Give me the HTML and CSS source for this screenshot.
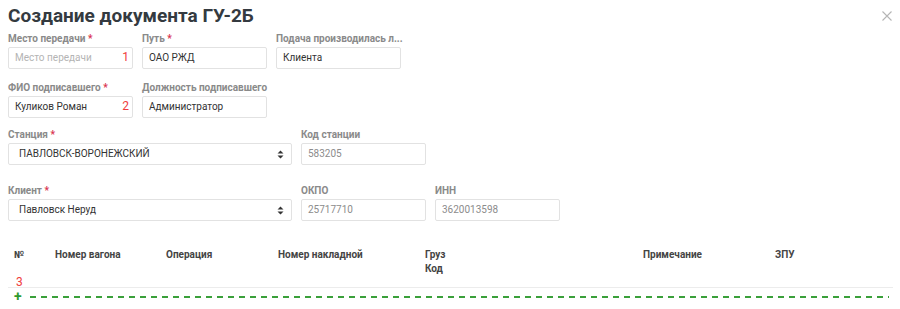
FILE: index.html
```html
<!DOCTYPE html>
<html lang="ru">
<head>
<meta charset="utf-8">
<link rel="stylesheet" href="styles.css">
</head>
<body>
<div class="modal">
  <div class="head">
    <h1 class="title">Создание документа ГУ-2Б</h1>
    <span class="close">
      <svg width="10" height="10" viewBox="0 0 10 10"><path d="M0.5 0.5L9.5 9.5M9.5 0.5L0.5 9.5" stroke="#b5b5b5" stroke-width="1.1" fill="none"/></svg>
    </span>
  </div>

  <div class="row r1">
    <div class="field">
      <div class="label">Место передачи <span class="req">*</span></div>
      <div class="input placeholder">Место передачи<span class="mark">1</span></div>
    </div>
    <div class="field">
      <div class="label">Путь <span class="req">*</span></div>
      <div class="input">ОАО РЖД</div>
    </div>
    <div class="field">
      <div class="label">Подача производилась л...</div>
      <div class="input">Клиента</div>
    </div>
  </div>

  <div class="row r2">
    <div class="field">
      <div class="label">ФИО подписавшего <span class="req">*</span></div>
      <div class="input">Куликов Роман<span class="mark">2</span></div>
    </div>
    <div class="field">
      <div class="label">Должность подписавшего</div>
      <div class="input">Администратор</div>
    </div>
  </div>

  <div class="row r3">
    <div class="field wide">
      <div class="label">Станция <span class="req">*</span></div>
      <div class="input select">ПАВЛОВСК-ВОРОНЕЖСКИЙ
        <svg class="arrows" width="7" height="9" viewBox="0 0 7 9"><path d="M3.5 0.5L6.5 3.5H0.5Z M3.5 8.5L6.5 5.5H0.5Z" fill="#333"/></svg>
      </div>
    </div>
    <div class="field">
      <div class="label">Код станции</div>
      <div class="input disabled">583205</div>
    </div>
  </div>

  <div class="row r4">
    <div class="field wide">
      <div class="label">Клиент <span class="req">*</span></div>
      <div class="input select">Павловск Неруд
        <svg class="arrows" width="7" height="9" viewBox="0 0 7 9"><path d="M3.5 0.5L6.5 3.5H0.5Z M3.5 8.5L6.5 5.5H0.5Z" fill="#333"/></svg>
      </div>
    </div>
    <div class="field">
      <div class="label">ОКПО</div>
      <div class="input disabled">25717710</div>
    </div>
    <div class="field">
      <div class="label">ИНН</div>
      <div class="input disabled">3620013598</div>
    </div>
  </div>

  <table class="grid">
    <thead>
      <tr>
        <th class="c1">№</th>
        <th class="c2">Номер вагона</th>
        <th class="c3">Операция</th>
        <th class="c4">Номер накладной</th>
        <th class="c5">Груз<br>Код</th>
        <th class="c6">Примечание</th>
        <th class="c7">ЗПУ</th>
      </tr>
    </thead>
  </table>
  <div class="mark3">3</div>
  <div class="addrow">
    <span class="plus">+</span>
    <span class="dash"></span>
  </div>
</div>
</body>
</html>
```

FILE: styles.css
```css
* { box-sizing: border-box; }
html, body { margin: 0; padding: 0; background: #fff; }
body {
  font-family: Roboto, "Noto Sans", "Liberation Sans", sans-serif;
  color: #333;
  width: 900px;
  height: 309px;
  overflow: hidden;
}
.modal { padding: 4px 8px 0 8px; }
.head { display: flex; justify-content: space-between; align-items: flex-start; }
.title {
  margin: 0;
  font-size: 19px;
  line-height: 24px;
  font-weight: 700;
  color: #343a40;
}
.close { margin-top: 7px; margin-right: 0; display: block; }
.close svg { display: block; }

.row { display: flex; gap: 9px; }
.r1 { margin-top: 4px; }
.r2 { margin-top: 12px; }
.r3 { margin-top: 10px; }
.r4 { margin-top: 19px; }

.field { width: 125px; display: flex; flex-direction: column; }
.field.wide { width: 284px; }
.label {
  font-size: 10px;
  line-height: 13px;
  font-weight: 700;
  color: #8a8a8a;
  margin-bottom: 2px;
  white-space: nowrap;
}
.req { color: #d9334f; }
.input {
  position: relative;
  height: 22px;
  border: 1px solid #e2e2e2;
  border-radius: 2px;
  font-size: 10px;
  line-height: 20px;
  padding: 0 6px;
  color: #333;
  white-space: nowrap;
}
.input.placeholder { color: #b4b4b4; }
.input.disabled { color: #8c8c8c; }
.select { padding-left: 10px; display: flex; align-items: center; justify-content: space-between; padding-right: 7px; }
.arrows { display: block; }
.mark {
  position: absolute;
  right: 3px;
  top: 0;
  color: #f03c3c;
  font-size: 12px;
  line-height: 18px;
}

.grid {
  margin-top: 27px;
  width: 885px;
  border-collapse: collapse;
  table-layout: fixed;
}
.grid th {
  text-align: left;
  vertical-align: top;
  font-size: 10px;
  line-height: 14px;
  font-weight: 700;
  color: #444;
  padding: 0 6px 11px 6px;
  border-bottom: 1px solid #ececec;
}
.c1 { width: 41px; }
.c2 { width: 111px; }
.c3 { width: 112px; }
.c4 { width: 147px; }
.c5 { width: 218px; }
.c6 { width: 132px; }
.c7 { width: 124px; }

.mark3 {
  position: relative;
  margin-top: -11px;
  margin-left: 8px;
  color: #f03c3c;
  font-size: 12px;
  line-height: 11px;
  height: 11px;
}
.addrow { display: flex; align-items: center; margin-top: 3px; padding-left: 6px; }
.plus { color: #2e9a2e; font-weight: 700; font-size: 14px; line-height: 11px; width: 16px; }
.dash {
  flex: 1;
  height: 2px;
  margin-right: 3px;
  background: repeating-linear-gradient(90deg, #3aa03a 0 6px, transparent 6px 11px);
}
```
